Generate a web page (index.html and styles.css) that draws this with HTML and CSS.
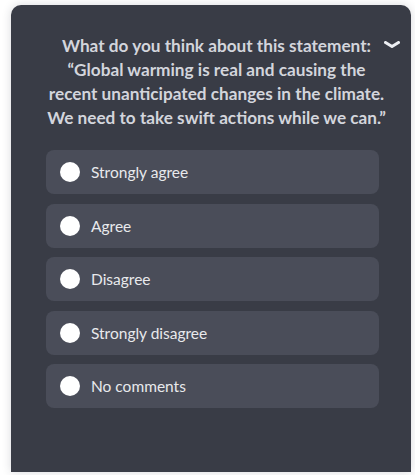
FILE: index.html
```html
<!DOCTYPE html>
<html lang="en">
<head>
<meta charset="utf-8">
<link rel="stylesheet" href="styles.css">
</head>
<body>
<div class="card">
  <button class="collapse" aria-label="Collapse">
    <svg width="16" height="8" viewBox="0 0 16 8"><path d="M1.5 1.5 L8 5.5 L14.5 1.5" fill="none" stroke="#eceef2" stroke-width="3" stroke-linecap="round" stroke-linejoin="round"/></svg>
  </button>
  <h2 class="question">What do you think about this statement:<br>“Global warming is real and causing the<br>recent unanticipated changes in the climate.<br>We need to take swift actions while we can.”</h2>
  <div class="options">
    <label class="option"><span class="radio"></span><span class="label">Strongly agree</span></label>
    <label class="option"><span class="radio"></span><span class="label">Agree</span></label>
    <label class="option"><span class="radio"></span><span class="label">Disagree</span></label>
    <label class="option"><span class="radio"></span><span class="label">Strongly disagree</span></label>
    <label class="option"><span class="radio"></span><span class="label">No comments</span></label>
  </div>
</div>
</body>
</html>
```
FILE: styles.css
```css
* { box-sizing: border-box; }
html, body { margin: 0; padding: 0; background: #ffffff; }
body {
  font-family: "Lato", "Liberation Sans", sans-serif;
  padding: 5px 4px 0 11px;
  height: 475px;
  overflow: hidden;
}
.card {
  position: relative;
  width: 400px;
  height: 467px;
  background: #393c46;
  border-radius: 10px 10px 0 0;
  box-shadow: 0 0 10px rgba(40, 45, 60, 0.18);
  padding: 29px 24px 0 35px;
}
.collapse {
  position: absolute;
  top: 36px;
  right: 11px;
  border: 0;
  background: none;
  padding: 0;
  width: 16px;
  height: 8px;
  display: flex;
}
.question {
  margin: 0;
  font-size: 17.2px;
  line-height: 24px;
  font-weight: 700;
  color: #d3d5dc;
  text-align: center;
  white-space: nowrap;
}
.options {
  margin-top: 20px;
  width: 333px;
  display: flex;
  flex-direction: column;
  gap: 9.5px;
}
.option {
  display: flex;
  align-items: center;
  height: 44px;
  background: #4a4d59;
  border-radius: 8px;
  padding-left: 14px;
  gap: 11px;
  cursor: pointer;
}
.radio {
  width: 20px;
  height: 20px;
  border-radius: 50%;
  background: #ffffff;
  flex: none;
}
.label {
  font-size: 15.5px;
  color: #e8e9ec;
}
```
